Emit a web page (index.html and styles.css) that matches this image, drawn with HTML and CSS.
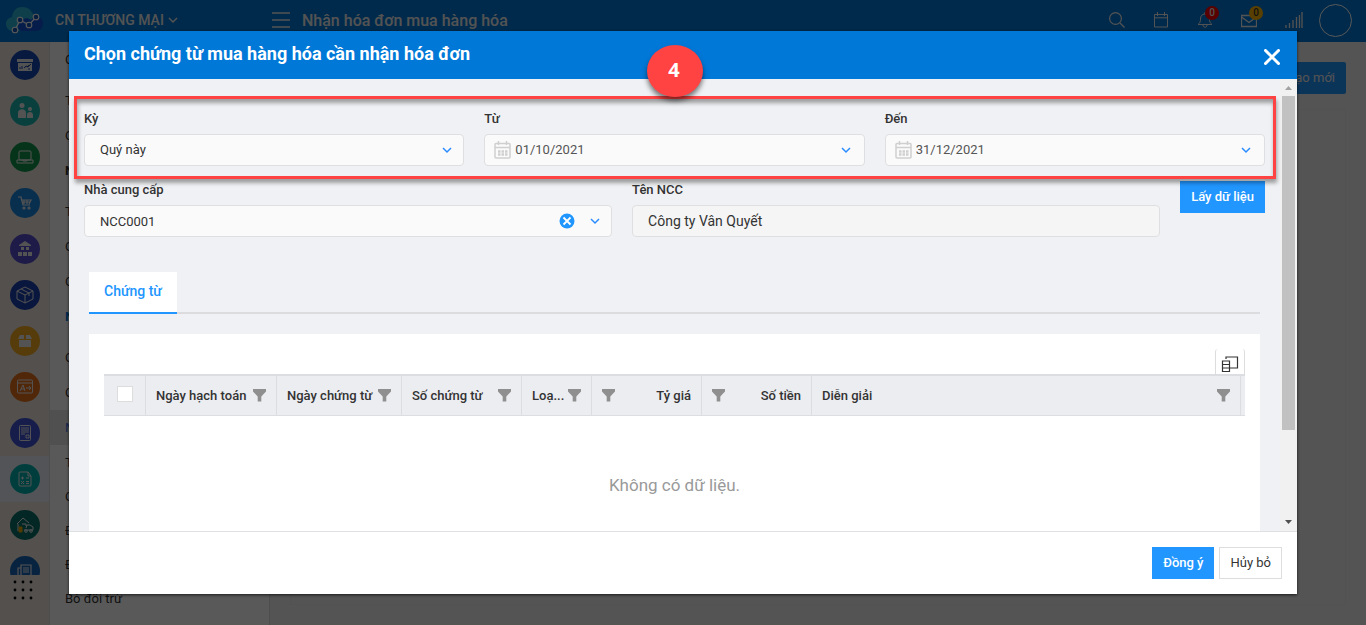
FILE: index.html
```html
<!DOCTYPE html>
<html lang="vi">
<head>
<meta charset="utf-8">
<meta name="viewport" content="width=device-width, initial-scale=1">
<title>Nhận hóa đơn mua hàng hóa</title>
<link rel="stylesheet" href="styles.css">
</head>
<body>
<svg class="defs" aria-hidden="true">
  <symbol id="chevron" viewBox="0 0 10 10"><path d="M1 3l4 4 4-4" fill="none" stroke="currentColor" stroke-width="1.5"/></symbol>
  <symbol id="filter" viewBox="0 0 13 13"><path d="M0 0h13v2.500L8.300 7.500V12.500H4.700V7.500L0 2.500z" fill="currentColor"/></symbol>
  <symbol id="calendar" viewBox="0 0 17 18"><g fill="none" stroke="currentColor"><rect x="1" y="2.500" width="15" height="14.500" rx="1" stroke-width="1.500"/><path d="M1 6.500h15M4.500 0v4M12.500 0v4" stroke-width="1.500"/><path d="M4 10.500h9.500M4 13.500h9.500" stroke-width="2.400" stroke-dasharray="2.500 1"/></g></symbol>
</svg>

<div class="app">
  <header class="topbar">
    <svg class="logo" viewBox="0 0 38 28" aria-hidden="true">
      <path d="M8 25a7 7 0 0 1-2-14C7 4 11 1 16 1c6 0 9 3 11 7 5 0 8 4 8 8 0 5-3 9-7 9z" fill="#2cb6d8"/>
      <path d="M15 25c-4-1-4-7 0-10 2-3 7-4 10-1 3-6 12-4 12 3 0 5-3 8-7 8z" fill="#1254d8"/>
      <path d="M9 24l5-10 9 5 7-8" fill="none" stroke="#fff" stroke-width="1.200"/>
      <g fill="#1254b8" stroke="#fff" stroke-width="1.100"><circle cx="9" cy="24" r="2.800"/><circle cx="14" cy="14" r="2.800"/><circle cx="23" cy="19" r="2.800"/><circle cx="30" cy="11" r="2.800"/></g>
    </svg>
    <button class="company" type="button">CN THƯƠNG MẠI <svg class="ic-s"><use href="#chevron"/></svg></button>
    <div class="heading">
      <button class="plain" type="button" aria-label="Menu"><svg class="burger" viewBox="0 0 18 16"><path d="M0 1h18M0 8h18M0 15h18" stroke="currentColor" stroke-width="1.500"/></svg></button>
      <h1>Nhận hóa đơn mua hàng hóa</h1>
    </div>
    <nav class="tools">
      <button class="plain tool" type="button" aria-label="Tìm kiếm"><svg viewBox="0 0 16 16"><g fill="none" stroke="currentColor" stroke-width="1.200"><circle cx="6.500" cy="6.500" r="5.900"/><path d="M11 11l4.500 4.500"/></g></svg></button>
      <button class="plain tool" type="button" aria-label="Lịch"><svg viewBox="0 0 16 16"><path d="M1.500 2.500h13v12.500h-13zM1.500 5.800h13M4.500 0v4M11.500 0v4" fill="none" stroke="currentColor"/></svg></button>
      <button class="plain tool" type="button" aria-label="Thông báo"><svg viewBox="0 0 16 16"><path d="M1 12.500c2-1.500 2.500-3 2.500-5.500C3.500 4 5 2 8 2s4.500 2 4.500 5c0 2.500.5 4 2.500 5.500zM6 13c0 3 4 3 4 0M8 0v2" fill="none" stroke="currentColor"/></svg><span class="count red">0</span></button>
      <button class="plain tool" type="button" aria-label="Thư"><svg viewBox="0 0 16 16"><path d="M.5 3.500h15v11H.5zM.5 5L8 10.500 15.500 5" fill="none" stroke="currentColor" stroke-width="1.300"/></svg><span class="count amber">0</span></button>
      <button class="plain tool signal" type="button" aria-label="Kết nối"><svg viewBox="0 0 18 16"><path d="M1 13v3M4.500 11v5M8 8v8M11.500 5v11M14.500 3v13M17 0v16" stroke="currentColor" stroke-width="1.300"/></svg></button>
      <button class="avatar" type="button" aria-label="Tài khoản"></button>
    </nav>
  </header>

  <div class="main">
    <aside class="rail">
      <ul class="rail-list">
        <li><a href="#" class="dot navy" aria-label="Bàn làm việc"><svg viewBox="0 0 18 18"><path d="M1 3h16v3H1zM2 7h14v8H2z" fill="currentColor"/><path d="M4 13v-2M6 13v-3M8 12l2-2 2 1 3-3M12 13h2" stroke="#1749b5"/></svg></a></li>
        <li><a href="#" class="dot teal" aria-label="Khách hàng"><svg viewBox="0 0 18 18" fill="currentColor"><circle cx="6" cy="3.500" r="2.500"/><circle cx="14" cy="7" r="2"/><path d="M2 16v-5c0-5 8-5 8 0v5zM11 16v-3c0-4 6-4 6 0v3z"/></svg></a></li>
        <li><a href="#" class="dot green" aria-label="Bán hàng"><svg viewBox="0 0 18 18" fill="none" stroke="currentColor"><rect x="3" y="3" width="12" height="9" rx="1"/><path d="M1 12h16v3H1zM7 12v1h4v-1"/></svg></a></li>
        <li><a href="#" class="dot blue" aria-label="Mua hàng"><svg viewBox="0 0 18 18" fill="none" stroke="currentColor" stroke-width="1.200"><path d="M2 3h3l2 8h7M5 6h10l-2 4M6 8h8M8 6v4M11 6v4"/><circle cx="8" cy="14" r="1"/><circle cx="13" cy="14" r="1"/></svg></a></li>
        <li><a href="#" class="dot violet" aria-label="Kho"><svg viewBox="0 0 18 18" fill="currentColor"><path d="M9 1l6 4v1H3V5zM5 7h3v3H5zM10 7h3v3h-3zM2 12h4v4H2zM7 12h4v4H7zM12 12h4v4h-4z"/></svg></a></li>
        <li><a href="#" class="dot deep" aria-label="Vật tư"><svg viewBox="0 0 18 18" fill="none" stroke="currentColor"><path d="M9 1l8 4v8l-8 4-8-4V5zM1 5l8 4 8-4M9 9v8M5 3l8 4v3"/></svg></a></li>
        <li><a href="#" class="dot yellow" aria-label="Công cụ"><svg viewBox="0 0 18 18" fill="currentColor"><path d="M4 3h4v4H2zM10 3h4l2 4h-6zM3 8h12v7H3z"/></svg></a></li>
        <li><a href="#" class="dot orange" aria-label="Tài sản"><svg viewBox="0 0 18 18" fill="none" stroke="currentColor"><rect x="1.500" y="2" width="15" height="13" rx="1"/><path d="M2 5h14M4 13l3-6 2 6M5 11h4M10 10h5M13 8l2 2-2 2"/></svg></a></li>
        <li><a href="#" class="dot indigo" aria-label="Thuế"><svg viewBox="0 0 18 18" fill="none" stroke="currentColor"><rect x="3.500" y="1.500" width="11" height="15" rx="1"/><path d="M5 4h8M5 6h8M5 8h8M5 10h4M10 11h3v3h-3z"/></svg></a></li>
        <li class="current"><a href="#" class="dot aqua" aria-label="Hóa đơn"><svg viewBox="0 0 18 18" fill="none" stroke="currentColor"><path d="M4 2h8l3 4v9a1 1 0 0 1-1 1H4a1 1 0 0 1-1-1V3a1 1 0 0 1 1-1zM12 2v4h3M5 8h3M6.500 6.500v3M10 8h3M5 11l3 3M8 11l-3 3M10 11.500h3M10 13.500h3"/></svg></a></li>
        <li><a href="#" class="dot pine" aria-label="Tài sản cố định"><svg viewBox="0 0 18 18" fill="none" stroke="currentColor"><path d="M1 8l6-6 6 5M2 8v7M6 8h4v2M8 14h9v-3l-3-2h-3l-1 3"/><path d="M3 11h3v5H3z" fill="#e9a500" stroke="#e9a500"/><circle cx="10" cy="15" r="1.300"/><circle cx="15" cy="15" r="1.300"/></svg></a></li>
        <li><a href="#" class="dot steel" aria-label="Báo cáo"><svg viewBox="0 0 18 18" fill="none" stroke="currentColor" stroke-width="1.200"><path d="M5 3h10v14H2V6h3zM7 6h6M7 8h6M7 10h6M5 6v10"/></svg></a></li>
      </ul>
      <button class="plain apps" type="button" aria-label="Ứng dụng"><svg viewBox="0 0 20 20"><g fill="#000"><circle cx="2" cy="2" r="1.400"/><circle cx="10" cy="2" r="1.400"/><circle cx="18" cy="2" r="1.400"/><circle cx="2" cy="10" r="1.400"/><circle cx="10" cy="10" r="1.400"/><circle cx="18" cy="10" r="1.400"/><circle cx="2" cy="18" r="1.400"/><circle cx="10" cy="18" r="1.400"/><circle cx="18" cy="18" r="1.400"/></g></svg></button>
    </aside>
    <nav class="menu">
      <ul><li><a href="#">C</a></li></ul>
      <ul><li><a href="#">T</a></li><li><a href="#">C</a></li><li><a href="#" class="group">N</a></li></ul>
      <ul><li><a href="#">T</a></li><li><a href="#">C</a></li><li><a href="#">C</a></li><li><a href="#" class="group active">N</a></li></ul>
      <ul><li><a href="#">C</a></li><li><a href="#">C</a></li><li><a href="#" class="selected">N</a></li></ul>
      <ul class="tight"><li><a href="#">T</a></li><li><a href="#">C</a></li><li><a href="#">Đ</a></li><li><a href="#">Đ</a></li><li><a href="#">Bỏ đối trừ</a></li></ul>
    </nav>
    <main class="content">
      <button class="create" type="button">Tạo mới</button>
      <div class="sheet"></div>
    </main>
  </div>
</div>

<div class="backdrop">
  <section class="modal" role="dialog" aria-labelledby="dlg-title">
    <header class="modal-head">
      <h2 id="dlg-title">Chọn chứng từ mua hàng hóa cần nhận hóa đơn</h2>
      <button class="plain" type="button" aria-label="Đóng"><svg class="close" viewBox="0 0 16 16"><path d="M1.500 1.500l13 13M14.500 1.500l-13 13" stroke="currentColor" stroke-width="3" stroke-linecap="round"/></svg></button>
    </header>
    <div class="modal-body">
      <div class="scroll">
        <form class="fields">
          <div class="row">
            <div class="field">
              <label for="period">Kỳ</label>
              <div class="control"><select id="period"><option>Quý này</option></select><svg class="ic-s"><use href="#chevron"/></svg></div>
            </div>
            <div class="field">
              <label for="from">Từ</label>
              <div class="control date"><svg class="cal"><use href="#calendar"/></svg><input id="from" type="text" value="01/10/2021"><button class="plain" type="button" aria-label="Chọn ngày bắt đầu"><svg class="ic-s"><use href="#chevron"/></svg></button></div>
            </div>
            <div class="field">
              <label for="to">Đến</label>
              <div class="control date"><svg class="cal"><use href="#calendar"/></svg><input id="to" type="text" value="31/12/2021"><button class="plain" type="button" aria-label="Chọn ngày kết thúc"><svg class="ic-s"><use href="#chevron"/></svg></button></div>
            </div>
          </div>
          <div class="row">
            <div class="field">
              <label for="vendor">Nhà cung cấp</label>
              <div class="control combo"><input id="vendor" type="text" value="NCC0001"><button class="plain" type="button" aria-label="Xóa"><svg class="clear" viewBox="0 0 16 16"><circle cx="8" cy="8" r="7.500" fill="#2196ff"/><path d="M4.500 4.500l7 7M11.500 4.500l-7 7" stroke="#fff" stroke-width="1.800"/></svg></button><button class="plain" type="button" aria-label="Chọn nhà cung cấp"><svg class="ic-s"><use href="#chevron"/></svg></button></div>
            </div>
            <div class="field">
              <label for="vendor-name">Tên NCC</label>
              <div class="control readonly"><input id="vendor-name" type="text" value="Công ty Vân Quyết" readonly></div>
            </div>
            <button class="primary load" type="button">Lấy dữ liệu</button>
          </div>
        </form>
        <div class="detail">
          <div class="tabs" role="tablist"><button class="tab" type="button" role="tab" aria-selected="true">Chứng từ</button></div>
          <div class="panel">
            <div class="grid-tools"><button type="button" aria-label="Chọn cột"><svg viewBox="0 0 18 16"><path d="M5 3V1h11.500v11H9M1.500 5h7v10.500h-7zM1.500 8.500h7M1.500 12h7" fill="none" stroke="currentColor" stroke-width="1.200"/></svg></button></div>
            <table>
              <colgroup><col class="c-check"><col class="c-posted"><col class="c-date"><col class="c-no"><col class="c-type"><col class="c-num"><col class="c-num"><col><col class="c-end"></colgroup>
              <thead>
                <tr>
                  <th><input type="checkbox" aria-label="Chọn tất cả"></th>
                  <th><div class="th"><span>Ngày hạch toán</span><svg class="fil"><use href="#filter"/></svg></div></th>
                  <th><div class="th"><span>Ngày chứng từ</span><svg class="fil"><use href="#filter"/></svg></div></th>
                  <th><div class="th"><span>Số chứng từ</span><svg class="fil"><use href="#filter"/></svg></div></th>
                  <th><div class="th"><span>Loạ...</span><svg class="fil"><use href="#filter"/></svg></div></th>
                  <th><div class="th num"><svg class="fil"><use href="#filter"/></svg><span>Tỷ giá</span></div></th>
                  <th><div class="th num"><svg class="fil"><use href="#filter"/></svg><span>Số tiền</span></div></th>
                  <th><div class="th last"><span>Diễn giải</span><svg class="fil"><use href="#filter"/></svg></div></th>
                  <th></th>
                </tr>
              </thead>
              <tbody><tr><td colspan="9">Không có dữ liệu.</td></tr></tbody>
            </table>
          </div>
        </div>
      </div>
      <div class="scrollbar" aria-hidden="true">
        <svg viewBox="0 0 17 17"><path d="M5 11h7L8.500 7z" fill="#a3a3a3"/></svg>
        <div class="track"><div class="thumb"></div></div>
        <svg viewBox="0 0 17 17"><path d="M5 6h7l-3.500 4z" fill="#505050"/></svg>
      </div>
    </div>
    <footer class="modal-foot">
      <button class="primary" type="button">Đồng ý</button>
      <button class="secondary" type="button">Hủy bỏ</button>
    </footer>
    <div class="highlight"></div>
    <div class="step">4</div>
  </section>
</div>
</body>
</html>
```

FILE: styles.css
```css
* { box-sizing: border-box; }

body {
  margin: 0;
  overflow: hidden;
  font-family: Roboto, "Noto Sans", sans-serif;
  font-size: 13px;
  color: #333;
}

ul { margin: 0; padding: 0; list-style: none; }
a { color: inherit; text-decoration: none; }
button, input, select { font: inherit; color: inherit; }
button { cursor: pointer; }
svg { display: block; flex: none; }

.defs { position: absolute; width: 0; height: 0; }
.plain { display: flex; padding: 0; border: 0; background: none; }
.ic-s { width: 10px; height: 10px; }

/* Application shell */
.app { display: flex; flex-direction: column; height: 100vh; background: #f0f0f0; }

.topbar {
  display: flex;
  align-items: center;
  height: 42px;
  flex: none;
  padding: 0 14px 2px 6px;
  background: #0078d7;
  color: #eee;
}
.logo { width: 38px; height: 28px; }
.company {
  display: flex;
  align-items: center;
  gap: 4px;
  width: 217px;
  padding: 0;
  margin-left: 11px;
  border: 0;
  background: none;
  font-size: 14px;
  font-weight: 500;
}
.heading { display: flex; align-items: center; gap: 12px; flex: 1; }
.heading h1 { margin: 0; font-size: 16px; font-weight: 500; }
.burger { width: 18px; height: 16px; }
.tools { display: flex; align-items: center; gap: 28px; }
.tool { position: relative; }
.tool svg { width: 16px; height: 16px; }
.tool.signal svg { width: 18px; }
.signal { margin-right: -12px; }
.count {
  position: absolute;
  left: 8px;
  top: -6px;
  width: 14px;
  height: 14px;
  border-radius: 50%;
  font-size: 10px;
  font-weight: 500;
  line-height: 14px;
  text-align: center;
}
.red { background: #f00; }
.amber { background: #ffb800; color: #333; }
.avatar { width: 33px; height: 33px; padding: 0; border: 1px solid #fff; border-radius: 50%; background: none; }

.main { display: flex; flex: 1; min-height: 0; }
.rail { display: flex; flex-direction: column; width: 50px; background: #ede5dc; border-right: 1px solid #ddd; }
.rail-list { flex: 1; min-height: 0; overflow: hidden; }
.rail-list li { padding: 8px 0 8px 10px; }
.rail-list .current { background: #eaf0fa; }
.dot { display: flex; align-items: center; justify-content: center; width: 30px; height: 30px; border-radius: 50%; color: #eee; }
.dot svg { width: 18px; height: 18px; }
.navy { background: #1749b5; }
.teal { background: #1cb8b0; }
.green { background: #12964a; }
.blue { background: #1c87e0; }
.violet { background: #5a4fd0; }
.deep { background: #1c3fae; }
.yellow { background: #f5ab22; }
.orange { background: #e8701a; }
.indigo { background: #3f55d6; }
.aqua { background: #00b3b3; }
.pine { background: #0a7068; }
.steel { background: #1564b8; }
.apps { height: 50px; padding: 5px 0 0 13px; }
.apps svg { width: 20px; height: 20px; }

.menu { width: 220px; background: #fff; border-right: 1px solid #ddd; overflow: hidden; }
.menu ul + ul { padding-top: 6px; }
.menu ul + .tight { padding-top: 1px; }
.menu a { display: block; padding-left: 15px; line-height: 35px; }
.menu .tight a { line-height: 34px; }
.menu .group { font-weight: 700; }
.menu .active { color: #0078d7; }
.menu .selected { background: #e8e6e4; color: #3f6fe0; }

.content { display: flex; flex-direction: column; flex: 1; gap: 15px; padding: 20px 20px; }
.create { align-self: flex-end; height: 32px; padding: 0 11px 2px; border: 0; border-radius: 2px; background: #2196ff; color: #eee; }
.sheet { flex: 1; border: 1px solid #ebebeb; }

/* Dialog */
.backdrop { position: fixed; inset: 0; padding: 31px 69px; background: rgba(0, 0, 0, 0.65); }
.modal {
  position: relative;
  display: flex;
  flex-direction: column;
  height: 100%;
  background: #fff;
  box-shadow: 0 1px 3px rgba(0, 0, 0, 0.7);
}
.modal-head {
  display: flex;
  align-items: center;
  justify-content: space-between;
  flex: none;
  height: 48px;
  padding: 0 17px 0 15px;
  background: #0078d7;
  color: #fff;
}
.modal-head h2 { margin: 0; padding-bottom: 2px; font-size: 18px; font-weight: 700; line-height: 20px; }
.modal-head .plain { padding-top: 4px; }
.close { width: 16px; height: 16px; }
.modal-body { display: flex; flex: 1; min-height: 0; background: #f0f1f4; }
.scroll { flex: 1; min-width: 0; overflow: hidden; }

.fields { display: flex; flex-direction: column; gap: 15px; padding: 31px 15px 0; }
.row { display: flex; align-items: flex-start; gap: 20px; }
.field { display: flex; flex-direction: column; gap: 6px; flex: 1; min-width: 0; }
.field label { font-weight: 500; line-height: 18px; }
.control {
  display: flex;
  align-items: center;
  height: 32px;
  padding: 0 11px 0 15px;
  border: 1px solid #dfdfe1;
  border-radius: 4px;
  background: #fafafa;
}
.control .ic-s { color: #2a8cff; }
.control input, .control select {
  flex: 1;
  min-width: 0;
  height: 30px;
  padding: 0;
  border: 0;
  outline: 0;
  background: none;
  appearance: none;
}
.control select, .control.date input { padding-bottom: 2px; }
.control.date { gap: 4px; padding: 0 13px 0 9px; color: #555; }
.cal { width: 17px; height: 18px; color: #cfcfcf; }
.control.combo { gap: 15px; }
.clear { width: 16px; height: 16px; }
.control.readonly { background: #f5f5f5; font-size: 14px; }

.primary, .secondary { height: 32px; padding: 0 11px 2px; border: 0; background: #2196ff; color: #fff; font-weight: 500; }
.secondary { padding: 0 10px 2px; border: 1px solid #ddd; background: #fff; color: #333; font-weight: 400; }
.load { flex: none; }

.detail { padding: 35px 20px 0; }
.tabs { border-bottom: 2px solid #dcdcde; display: flex; }
.tab {
  height: 42px;
  margin-bottom: -2px;
  padding: 0 15px 2px;
  border: 0;
  border-bottom: 2px solid #2196ff;
  background: #fff;
  color: #2196ff;
  font-size: 14px;
  font-weight: 500;
}
.panel { margin-top: 20px; padding: 15px; background: #fff; }
.grid-tools { display: flex; justify-content: flex-end; }
.grid-tools button {
  display: flex;
  align-items: center;
  justify-content: center;
  width: 30px;
  height: 25px;
  padding: 4px 0 0;
  border: 1px solid #ddd;
  border-width: 0 1px;
  border-radius: 3px 3px 0 0;
  background: #fff;
}
.grid-tools svg { width: 18px; height: 16px; }

table { width: 100%; table-layout: fixed; border-collapse: separate; border-spacing: 0; }
.c-check { width: 42px; }
.c-posted { width: 131px; }
.c-date { width: 125px; }
.c-no { width: 120px; }
.c-type { width: 70px; }
.c-num { width: 110px; }
.c-end { width: 4px; }
th {
  height: 42px;
  padding: 0;
  border: solid #dcdde0;
  border-width: 2px 1px 1px 0;
  background: #ecedf1;
  font-weight: 500;
  text-align: left;
}
th:last-child { border-right: 0; }
th input {
  display: block;
  width: 16px;
  height: 16px;
  margin: 0 0 3px 13px;
  border: 1px solid #ddd;
  background: #fff;
  appearance: none;
}
.th { display: flex; align-items: center; justify-content: space-between; padding: 0 10px; white-space: nowrap; }
.fil { width: 13px; height: 13px; color: #8f8f8f; }
td { height: 137px; padding: 0; text-align: center; font-size: 17px; color: #999; }

.scrollbar { display: flex; flex-direction: column; width: 17px; background: #f1f1f1; }
.scrollbar svg { width: 17px; height: 17px; }
.track { flex: 1; padding: 0 2px; }
.thumb { height: 80%; background: #c1c1c1; }

.modal-foot {
  display: flex;
  justify-content: flex-end;
  gap: 5px;
  flex: none;
  padding: 15px;
  border-top: 1px solid #dfe0e3;
}

/* Guide annotation over the dialog */
.highlight {
  position: absolute;
  top: 65px;
  left: 5px;
  right: 21px;
  height: 83px;
  border: 3px solid #ff4343;
  box-shadow: 1px 4px 4px rgba(0, 0, 0, 0.35), inset 1px 4px 4px rgba(0, 0, 0, 0.35);
  pointer-events: none;
}
.step {
  position: absolute;
  top: 14px;
  left: 578px;
  width: 56px;
  height: 52px;
  padding-right: 2px;
  border-radius: 50%;
  background: #ff4343;
  color: #fff;
  font-family: "Open Sans", sans-serif;
  font-size: 20px;
  font-weight: 700;
  line-height: 50px;
  text-align: center;
  box-shadow: 0 4px 5px rgba(0, 0, 0, 0.5);
}
```
